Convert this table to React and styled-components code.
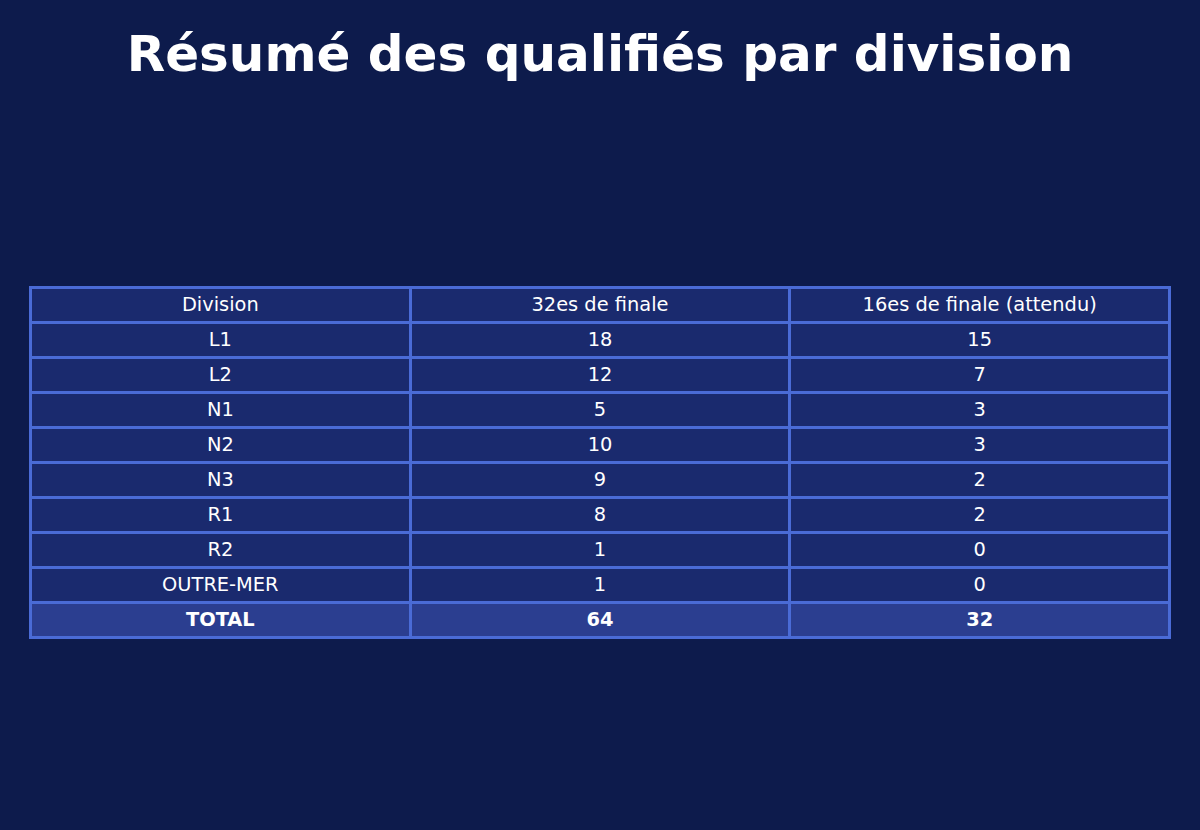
import React from "react";
import styled, { createGlobalStyle } from "styled-components";

const Global = createGlobalStyle`
  html, body { margin: 0; padding: 0; background: #0d1b4c; }
  body { font-family: "DejaVu Sans", Verdana, sans-serif; color: #ffffff; }
`;

const Page = styled.main`
  width: 1200px;
  height: 830px;
  box-sizing: border-box;
  padding: 25px 29px 0;
  display: flex;
  flex-direction: column;
  align-items: stretch;
`;

const Title = styled.h1`
  margin: 0;
  font-size: 50px;
  font-weight: 700;
  text-align: center;
  line-height: 58px;
  color: #ffffff;
`;

const Table = styled.table`
  margin-top: 203px;
  width: 1142px;
  border-collapse: collapse;
  table-layout: fixed;
  font-size: 19.4px;
`;

const Cell = styled.td`
  border: 3px solid #4a6bd6;
  background: ${(p) => (p.$total ? "#2b3e90" : "#1a2a6e")};
  font-weight: ${(p) => (p.$total ? 700 : 400)};
  text-align: center;
  padding: 5px 8px;
  line-height: 22px;
  height: 22px;
  color: #ffffff;
`;

const HeadCell = styled(Cell).attrs({ as: "th" })`
  font-weight: 400;
`;

const rows = [
  ["L1", "18", "15"],
  ["L2", "12", "7"],
  ["N1", "5", "3"],
  ["N2", "10", "3"],
  ["N3", "9", "2"],
  ["R1", "8", "2"],
  ["R2", "1", "0"],
  ["OUTRE-MER", "1", "0"],
];

export default function App() {
  return (
    <>
      <Global />
      <Page>
        <Title>Résumé des qualifiés par division</Title>
        <Table>
          <thead>
            <tr>
              <HeadCell>Division</HeadCell>
              <HeadCell>32es de finale</HeadCell>
              <HeadCell>16es de finale (attendu)</HeadCell>
            </tr>
          </thead>
          <tbody>
            {rows.map((r) => (
              <tr key={r[0]}>
                {r.map((c, i) => (
                  <Cell key={i}>{c}</Cell>
                ))}
              </tr>
            ))}
            <tr>
              <Cell $total>TOTAL</Cell>
              <Cell $total>64</Cell>
              <Cell $total>32</Cell>
            </tr>
          </tbody>
        </Table>
      </Page>
    </>
  );
}
